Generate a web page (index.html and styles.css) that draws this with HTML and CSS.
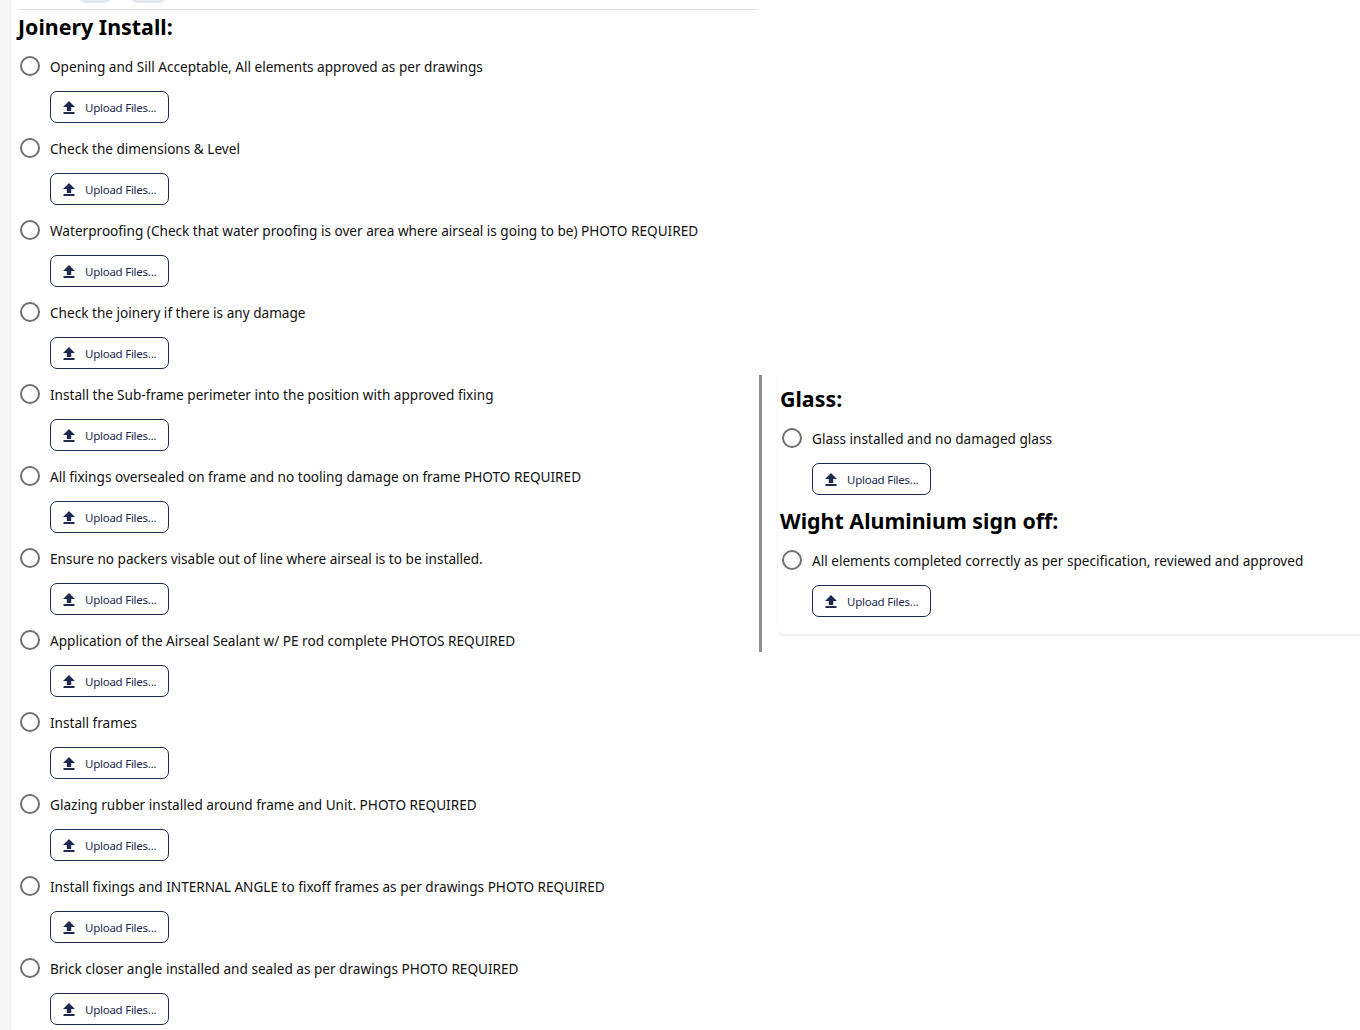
FILE: index.html
```html
<!DOCTYPE html>
<html>
<head>
<meta charset="utf-8">
<link rel="stylesheet" href="styles.css">
</head>
<body>
<div class="page">
  <div class="side"></div>
  <div class="main">
    <div class="toolbar"><span class="tb tb1"></span><span class="tb tb2"></span></div>
    <div class="layout">
      <section class="left">
        <h2 class="title">Joinery Install:</h2>
        <div class="item"><label class="check"><span class="radio"></span>Opening and Sill Acceptable, All elements approved as per drawings</label><button class="upload"><svg class="ic" viewBox="0 0 12 13"><path d="M6 0 L12 6 H8.2 V10 H3.8 V6 H0 Z"/><rect x="0.5" y="11" width="11" height="2"/></svg>Upload Files...</button></div>
        <div class="item"><label class="check"><span class="radio"></span>Check the dimensions &amp; Level</label><button class="upload"><svg class="ic" viewBox="0 0 12 13"><path d="M6 0 L12 6 H8.2 V10 H3.8 V6 H0 Z"/><rect x="0.5" y="11" width="11" height="2"/></svg>Upload Files...</button></div>
        <div class="item"><label class="check"><span class="radio"></span>Waterproofing (Check that water proofing is over area where airseal is going to be) PHOTO REQUIRED</label><button class="upload"><svg class="ic" viewBox="0 0 12 13"><path d="M6 0 L12 6 H8.2 V10 H3.8 V6 H0 Z"/><rect x="0.5" y="11" width="11" height="2"/></svg>Upload Files...</button></div>
        <div class="item"><label class="check"><span class="radio"></span>Check the joinery if there is any damage</label><button class="upload"><svg class="ic" viewBox="0 0 12 13"><path d="M6 0 L12 6 H8.2 V10 H3.8 V6 H0 Z"/><rect x="0.5" y="11" width="11" height="2"/></svg>Upload Files...</button></div>
        <div class="item"><label class="check"><span class="radio"></span>Install the Sub-frame perimeter into the position with approved fixing</label><button class="upload"><svg class="ic" viewBox="0 0 12 13"><path d="M6 0 L12 6 H8.2 V10 H3.8 V6 H0 Z"/><rect x="0.5" y="11" width="11" height="2"/></svg>Upload Files...</button></div>
        <div class="item"><label class="check"><span class="radio"></span>All fixings oversealed on frame and no tooling damage on frame PHOTO REQUIRED</label><button class="upload"><svg class="ic" viewBox="0 0 12 13"><path d="M6 0 L12 6 H8.2 V10 H3.8 V6 H0 Z"/><rect x="0.5" y="11" width="11" height="2"/></svg>Upload Files...</button></div>
        <div class="item"><label class="check"><span class="radio"></span>Ensure no packers visable out of line where airseal is to be installed.</label><button class="upload"><svg class="ic" viewBox="0 0 12 13"><path d="M6 0 L12 6 H8.2 V10 H3.8 V6 H0 Z"/><rect x="0.5" y="11" width="11" height="2"/></svg>Upload Files...</button></div>
        <div class="item"><label class="check"><span class="radio"></span>Application of the Airseal Sealant w/ PE rod complete PHOTOS REQUIRED</label><button class="upload"><svg class="ic" viewBox="0 0 12 13"><path d="M6 0 L12 6 H8.2 V10 H3.8 V6 H0 Z"/><rect x="0.5" y="11" width="11" height="2"/></svg>Upload Files...</button></div>
        <div class="item"><label class="check"><span class="radio"></span>Install frames</label><button class="upload"><svg class="ic" viewBox="0 0 12 13"><path d="M6 0 L12 6 H8.2 V10 H3.8 V6 H0 Z"/><rect x="0.5" y="11" width="11" height="2"/></svg>Upload Files...</button></div>
        <div class="item"><label class="check"><span class="radio"></span>Glazing rubber installed around frame and Unit. PHOTO REQUIRED</label><button class="upload"><svg class="ic" viewBox="0 0 12 13"><path d="M6 0 L12 6 H8.2 V10 H3.8 V6 H0 Z"/><rect x="0.5" y="11" width="11" height="2"/></svg>Upload Files...</button></div>
        <div class="item"><label class="check"><span class="radio"></span>Install fixings and INTERNAL ANGLE to fixoff frames as per drawings PHOTO REQUIRED</label><button class="upload"><svg class="ic" viewBox="0 0 12 13"><path d="M6 0 L12 6 H8.2 V10 H3.8 V6 H0 Z"/><rect x="0.5" y="11" width="11" height="2"/></svg>Upload Files...</button></div>
        <div class="item"><label class="check"><span class="radio"></span>Brick closer angle installed and sealed as per drawings PHOTO REQUIRED</label><button class="upload"><svg class="ic" viewBox="0 0 12 13"><path d="M6 0 L12 6 H8.2 V10 H3.8 V6 H0 Z"/><rect x="0.5" y="11" width="11" height="2"/></svg>Upload Files...</button></div>
      </section>
      <aside class="right">
        <div class="card">
          <h2 class="title">Glass:</h2>
          <div class="item"><label class="check"><span class="radio"></span>Glass installed and no damaged glass</label><button class="upload"><svg class="ic" viewBox="0 0 12 13"><path d="M6 0 L12 6 H8.2 V10 H3.8 V6 H0 Z"/><rect x="0.5" y="11" width="11" height="2"/></svg>Upload Files...</button></div>
          <h2 class="title">Wight Aluminium sign off:</h2>
          <div class="item"><label class="check"><span class="radio"></span>All elements completed correctly as per specification, reviewed and approved</label><button class="upload"><svg class="ic" viewBox="0 0 12 13"><path d="M6 0 L12 6 H8.2 V10 H3.8 V6 H0 Z"/><rect x="0.5" y="11" width="11" height="2"/></svg>Upload Files...</button></div>
        </div>
      </aside>
    </div>
  </div>
</div>
</body>
</html>
```
FILE: styles.css
```css
html, body {
  margin: 0;
  padding: 0;
  background: #ffffff;
  font-family: "Noto Sans", "Open Sans", sans-serif;
  color: #111;
  overflow: hidden;
}
.page {
  display: flex;
  min-height: 1030px;
}
.side {
  width: 10px;
  flex: 0 0 10px;
  background: #f7f7f7;
  border-right: 1px solid #efefef;
}
.main {
  flex: 1;
  overflow: hidden;
}
.toolbar {
  display: flex;
  align-items: flex-start;
  gap: 18px;
  margin: -24px 0 0 67px;
  height: 33px;
}
.tb {
  display: block;
  height: 27px;
  border-radius: 8px;
  background: #e3e7ee;
}
.tb1 { width: 34px; }
.tb2 { width: 37px; }
.layout {
  display: flex;
  align-items: flex-start;
}
.left {
  width: 740px;
  flex: 0 0 740px;
  margin-left: 7px;
  border-top: 1px solid #e2e2e2;
  padding-top: 2px;
}
.title {
  margin: 0 0 12px 0;
  font-size: 21.4px;
  font-weight: 700;
  line-height: 30px;
  color: #000;
}
.item {
  padding-bottom: 13px;
}
.check {
  display: flex;
  align-items: center;
  height: 24px;
  font-size: 13.6px;
  color: #111;
}
.radio {
  box-sizing: border-box;
  width: 20px;
  height: 20px;
  border: 2px solid #707070;
  border-radius: 50%;
  margin: 0 10px 0 2px;
  flex: 0 0 20px;
}
.upload {
  display: flex;
  align-items: center;
  box-sizing: border-box;
  margin: 13px 0 0 32px;
  width: 119px;
  height: 32px;
  padding: 0 0 0 12px;
  background: #fff;
  border: 1px solid #1b2a4e;
  border-radius: 7px;
  font-family: "Noto Sans", sans-serif;
  font-size: 11.5px;
  letter-spacing: -0.25px;
  color: #1b2a4e;
  cursor: pointer;
}
.ic {
  width: 12px;
  height: 13px;
  fill: #1b2a4e;
  margin-right: 10px;
  flex: 0 0 12px;
}
.right {
  flex: 1;
  margin-top: 366px;
  border-left: 3px solid #8e8e8e;
  padding: 0 0 17px 0;
  margin-left: 1px;
}
.card {
  margin-left: 16px;
  padding: 9px 0 6px 2px;
  border-radius: 0 0 0 6px;
  box-shadow: 0 1px 2px rgba(0,0,0,0.08);
  border-bottom: 1px solid #f0f0f0;
}
.card .item { padding-bottom: 11px; }
```
